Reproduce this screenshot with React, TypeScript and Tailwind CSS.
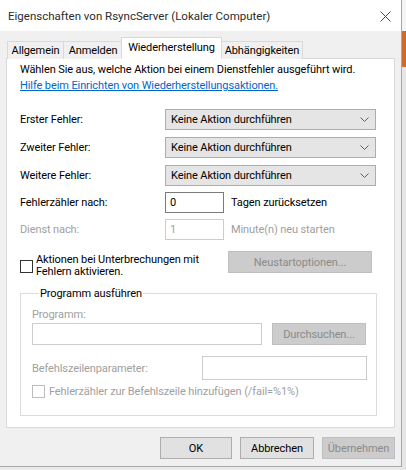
import React from "react";

const disabledText = "text-[#a0a0a0]";

function Chevron() {
  return (
    <svg width="9" height="5" viewBox="0 0 9 5" className="shrink-0">
      <path d="M0.5 0.5 L4.5 4.5 L8.5 0.5" fill="none" stroke="#606060" strokeWidth="1" />
    </svg>
  );
}

function Combo({ value }: { value: string }) {
  return (
    <div className="w-[211px] h-[21px] flex items-center justify-between pl-[5px] pr-[6px] bg-[#e5e5e5] border border-[#adadad]">
      <span>{value}</span>
      <Chevron />
    </div>
  );
}

function Button({ label, disabled, width }: { label: string; disabled?: boolean; width: string }) {
  return (
    <button
      type="button"
      className={
        "h-[22px] flex items-center justify-center border whitespace-nowrap " +
        width +
        (disabled
          ? " bg-[#cccccc] border-[#bfbfbf] text-[#8a8a8a]"
          : " bg-[#e1e1e1] border-[#adadad] text-black")
      }
    >
      {label}
    </button>
  );
}

function Tab({ label, width, active }: { label: string; width: string; active?: boolean }) {
  return (
    <div
      className={
        "flex justify-center border border-[#d9d9d9] whitespace-nowrap shrink-0 " +
        width +
        (active
          ? " h-[22px] bg-white border-b-white -mx-[1px] pt-[2px] z-10"
          : " h-[18px] bg-[#f0f0f0] border-b-0 -mr-[1px] pt-[1px]")
      }
    >
      {label}
    </div>
  );
}

export default function App() {
  return (
    <div className="w-[406px] h-[470px] flex bg-[#e9e9e9] overflow-hidden font-['Roboto','Segoe_UI',sans-serif] text-[11px] tracking-[-0.1px] leading-[15px] text-black whitespace-nowrap">
      {/* Fenster */}
      <div className="w-[402px] h-[467px] flex flex-col border-r border-b border-[#a8a8a8] bg-[#f0f0f0]">
        {/* Titelleiste */}
        <div className="h-[31px] shrink-0 flex items-center justify-between pl-[8px] pr-[10px] pt-[2px] bg-white">
          <span className="text-[11.5px] tracking-normal text-[#2b2b2b]">Eigenschaften von RsyncServer (Lokaler Computer)</span>
          <svg width="11" height="11" viewBox="0 0 11 11">
            <path d="M0.5 0.5 L10.5 10.5 M10.5 0.5 L0.5 10.5" stroke="#4a4a4a" strokeWidth="1" />
          </svg>
        </div>

        <div className="flex-1 flex flex-col px-[6px] pt-[7px]">
          {/* Reiter */}
          <div className="h-[21px] flex items-end pl-[1px] -mb-[1px] relative">
            <Tab label="Allgemein" width="w-[57px]" />
            <Tab label="Anmelden" width="w-[60px]" />
            <Tab label="Wiederherstellung" width="w-[101px]" active />
            <Tab label="Abhängigkeiten" width="w-[82px]" />
          </div>

          {/* Reiterinhalt */}
          <div className="h-[370px] shrink-0 border border-[#d9d9d9] bg-white pl-[13px] pt-[3px]">
            <div className="leading-[16px]">
              <p>Wählen Sie aus, welche Aktion bei einem Dienstfehler ausgeführt wird.</p>
              <a className="text-[#0066cc] underline">Hilfe beim Einrichten von Wiederherstellungsaktionen.</a>
            </div>

            <div className="mt-[15px] flex flex-col gap-[7px]">
              <div className="flex items-center h-[21px]">
                <span className="w-[145px]">Erster Fehler:</span>
                <Combo value="Keine Aktion durchführen" />
              </div>
              <div className="flex items-center h-[21px]">
                <span className="w-[145px]">Zweiter Fehler:</span>
                <Combo value="Keine Aktion durchführen" />
              </div>
              <div className="flex items-center h-[21px]">
                <span className="w-[145px]">Weitere Fehler:</span>
                <Combo value="Keine Aktion durchführen" />
              </div>
            </div>

            <div className="mt-[6px] flex flex-col gap-[6px]">
              <div className="flex items-center h-[21px]">
                <span className="w-[145px]">Fehlerzähler nach:</span>
                <div className="w-[59px] h-[21px] border border-[#7a7a7a] pl-[4px] flex items-center">0</div>
                <span className="ml-[7px]">Tagen zurücksetzen</span>
              </div>
              <div className={"flex items-center h-[21px] " + disabledText}>
                <span className="w-[145px]">Dienst nach:</span>
                <div className="w-[59px] h-[21px] border border-[#cccccc] pl-[4px] flex items-center">1</div>
                <span className="ml-[7px]">Minute(n) neu starten</span>
              </div>
            </div>

            <div className="mt-[11px] flex items-start">
              <div className="w-[208px] flex items-end pt-[3px]">
                <div className="w-[13px] h-[13px] border border-[#333333] shrink-0 mb-[5px]" />
                <span className="ml-[3px] leading-[12px]">
                  Aktionen bei Unterbrechungen mit
                  <br />
                  Fehlern aktivieren.
                </span>
              </div>
              <Button label="Neustartoptionen..." width="w-[144px]" disabled />
            </div>

            {/* Gruppe */}
            <fieldset className="mt-[8px] w-[357px] h-[130px] border border-[#dcdcdc] pl-[11px]">
              <legend className="ml-[7px] px-[1px]">Programm ausführen</legend>
              <div className={"mt-[6px] " + disabledText}>Programm:</div>
              <div className="mt-[1px] flex items-center">
                <div className="w-[230px] h-[22px] border border-[#cccccc]" />
                <div className="ml-[10px]">
                  <Button label="Durchsuchen..." width="w-[94px]" disabled />
                </div>
              </div>
              <div className="mt-[11px] flex items-center">
                <span className={"w-[170px] " + disabledText}>Befehlszeilenparameter:</span>
                <div className="w-[165px] h-[24px] border border-[#cccccc]" />
              </div>
              <div className={"mt-[4px] flex items-center " + disabledText}>
                <div className="w-[13px] h-[13px] border border-[#bcbcbc]" />
                <span className="ml-[4px]">Fehlerzähler zur Befehlszeile hinzufügen (/fail=%1%)</span>
              </div>
            </fieldset>
          </div>

          {/* Schaltflächen */}
          <div className="mt-[9px] flex justify-end gap-[8px]">
            <Button label="OK" width="w-[72px]" />
            <Button label="Abbrechen" width="w-[74px]" />
            <Button label="Übernehmen" width="w-[73px]" disabled />
          </div>
        </div>
      </div>

      {/* Hintergrund rechts */}
      <div className="w-[4px] flex flex-col">
        <div className="h-[31px] bg-[#f4f4f4]" />
        <div className="h-[36px] bg-[#d2692c]" />
        <div className="flex-1 bg-[#e6e6e6]" />
      </div>
    </div>
  );
}
